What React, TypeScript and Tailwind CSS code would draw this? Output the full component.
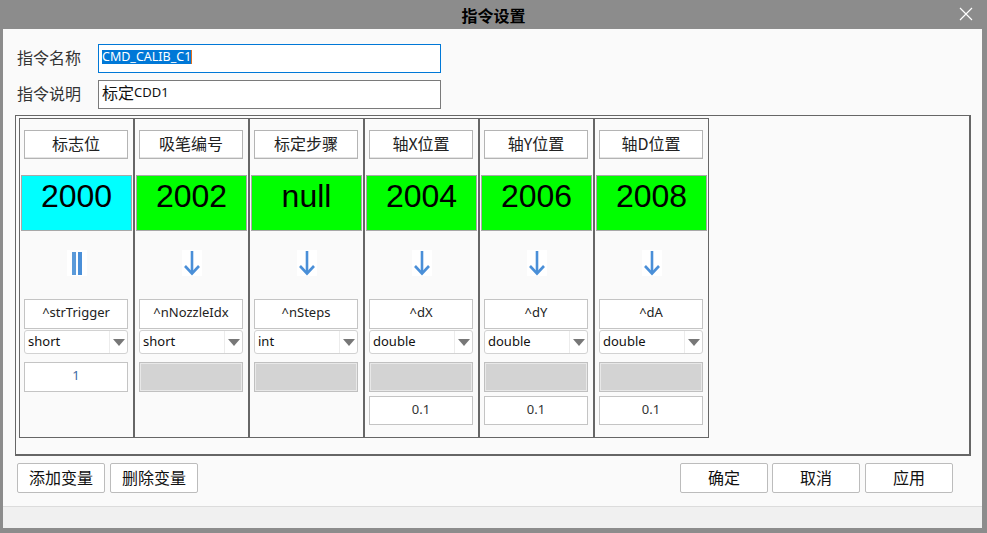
import React from 'react'

type Col = {
  label: string
  value: string
  color: string
  icon: 'pause' | 'down'
  name: string
  type: string
  v1: string | null
  v2: string | null
}

const cols: Col[] = [
  { label: '标志位', value: '2000', color: 'bg-[#00ffff]', icon: 'pause', name: '^strTrigger', type: 'short', v1: '1', v2: null },
  { label: '吸笔编号', value: '2002', color: 'bg-[#00ff00]', icon: 'down', name: '^nNozzleIdx', type: 'short', v1: null, v2: null },
  { label: '标定步骤', value: 'null', color: 'bg-[#00ff00]', icon: 'down', name: '^nSteps', type: 'int', v1: null, v2: null },
  { label: '轴X位置', value: '2004', color: 'bg-[#00ff00]', icon: 'down', name: '^dX', type: 'double', v1: null, v2: '0.1' },
  { label: '轴Y位置', value: '2006', color: 'bg-[#00ff00]', icon: 'down', name: '^dY', type: 'double', v1: null, v2: '0.1' },
  { label: '轴D位置', value: '2008', color: 'bg-[#00ff00]', icon: 'down', name: '^dA', type: 'double', v1: null, v2: '0.1' },
]

const cjk = "font-['Microsoft_YaHei','Noto_Sans_CJK_SC',sans-serif]"
const latin = "font-['Noto_Sans','Noto_Sans_CJK_SC',sans-serif]"

const FlowIcon = ({ kind }: { kind: 'pause' | 'down' }) => (
  <div className="mx-auto mt-[19px] flex h-[26px] w-[20px] items-center justify-center bg-white">
    {kind === 'pause' ? (
      <div className="flex h-[23px] gap-[2px]">
        <div className="w-[4px] bg-[#5b9ad9]" />
        <div className="w-[4px] bg-[#4a8fd8]" />
      </div>
    ) : (
      <svg width="20" height="26" viewBox="0 0 20 26">
        <path d="M10 1 V23" stroke="#4a8fd8" strokeWidth="2.6" fill="none" />
        <path d="M3 16 L10 23.5 L17 16" stroke="#4a8fd8" strokeWidth="2.6" fill="none" />
      </svg>
    )}
  </div>
)

const Column = ({ c }: { c: Col }) => (
  <div className="flex h-[320px] w-[115px] flex-col border border-[#666] pt-[11px]">
    <div className={`ml-[4px] flex h-[29px] w-[104px] items-center justify-center border border-[#b4b4b4] bg-white pb-[4px] text-[16px] text-[#222] shadow-[inset_0_-1px_0_#e4e4e4] ${cjk}`}>
      {c.label}
    </div>
    <div className={`ml-[1px] mt-[16px] flex h-[56px] w-[111px] items-center justify-center border border-[#a8a8a8] pb-[14px] ${c.color} font-['Liberation_Sans',Arial,sans-serif] text-[32px] leading-[36px] text-black`}>
      {c.value}
    </div>
    <FlowIcon kind={c.icon} />
    <div className={`ml-[4px] mt-[23px] flex h-[30px] w-[104px] items-center justify-center border border-[#c4c4c4] bg-white pb-[3px] text-[13px] text-[#222] ${latin}`}>
      {c.name}
    </div>
    <div className={`ml-[4px] mt-[1px] flex h-[24px] w-[104px] items-center rounded-[3px] border border-[#d2d2d2] bg-white ${latin}`}>
      <span className="flex-1 pl-[3px] text-[13px] text-[#111]">{c.type}</span>
      <div className="flex h-full w-[18px] items-center justify-center border-l border-[#ececec]">
        <svg width="12" height="7" viewBox="0 0 12 7">
          <path d="M0 0 H12 L6 7 Z" fill="#777" />
        </svg>
      </div>
    </div>
    {c.v1 ? (
      <div className={`ml-[4px] mt-[8px] flex h-[30px] w-[104px] items-center justify-center border border-[#c4c4c4] bg-white pb-[2px] text-[13px] text-[#3d6aa3] ${latin}`}>
        {c.v1}
      </div>
    ) : (
      <div className="ml-[4px] mt-[8px] h-[30px] w-[104px] border border-[#c0c0c0] bg-[#d3d3d3] shadow-[inset_0_0_0_1px_#e8e8e8]" />
    )}
    {c.v2 && (
      <div className={`ml-[4px] mt-[4px] flex h-[29px] w-[104px] items-center justify-center border border-[#c4c4c4] bg-white pb-[2px] text-[13px] text-[#333] ${latin}`}>
        {c.v2}
      </div>
    )}
  </div>
)

const Btn = ({ children }: { children: React.ReactNode }) => (
  <button className={`flex h-[30px] w-[88px] items-center justify-center rounded-[2px] border border-[#bcbcbc] bg-white pb-[3px] text-[16px] text-[#111] ${cjk}`}>
    {children}
  </button>
)

export default function App() {
  return (
    <div className="flex h-[533px] w-[987px] flex-col bg-[#8c8c8c]">
      <div className="relative flex h-[29px] items-center justify-center">
        <span className={`text-[16px] font-bold text-black ${cjk}`}>指令设置</span>
        <svg className="absolute right-[14px] top-[7px]" width="14" height="14" viewBox="0 0 14 14">
          <path d="M1 1 L13 13 M13 1 L1 13" stroke="#fff" strokeWidth="1.2" />
        </svg>
      </div>
      <div className="ml-[3px] mr-[5px] flex flex-1 flex-col bg-[#fafafa]">
        <div className="flex flex-col gap-[7px] pl-[14px] pt-[15px]">
          <div className="flex items-center">
            <span className={`w-[81px] pb-[3px] text-[16px] text-[#333] ${cjk}`}>指令名称</span>
            <div className="flex h-[29px] w-[343px] items-start border border-[#0078d7] bg-white pl-[3px] pt-[5px]">
              <span className={`bg-[#0078d7] text-[12.5px] leading-[14px] text-white ${latin}`}>CMD_CALIB_C1</span>
              <span className="h-[14px] w-[1px] bg-[#e07020]" />
            </div>
          </div>
          <div className="flex items-center">
            <span className={`w-[81px] pb-[3px] text-[16px] text-[#333] ${cjk}`}>指令说明</span>
            <div className="flex h-[29px] w-[343px] items-start border border-[#7a7a7a] bg-white pl-[3px] pt-[1px]">
              <span className={`text-[16px] leading-[21px] text-[#111] ${cjk}`}>标定</span>
              <span className={`text-[13px] leading-[21px] text-[#111] ${latin}`}>CDD1</span>
            </div>
          </div>
        </div>
        <div className="ml-[12px] mt-[6px] flex h-[341px] w-[956px] border border-[#666] border-r-2 border-b-2 pl-[3px] pt-[2px]">
          {cols.map((c) => (
            <Column key={c.name} c={c} />
          ))}
        </div>
        <div className="mt-[7px] flex items-center px-[14px]">
          <div className="flex gap-[5px]">
            <Btn>添加变量</Btn>
            <Btn>删除变量</Btn>
          </div>
          <div className="ml-auto mr-[15px] flex">
            <Btn>确定</Btn>
            <div className="w-[4px]" />
            <Btn>取消</Btn>
            <div className="w-[5px]" />
            <Btn>应用</Btn>
          </div>
        </div>
        <div className="mt-auto h-[22px] border-t border-[#dcdcdc] bg-[#f0f0f0]" />
      </div>
      <div className="h-[5px]" />
    </div>
  )
}
